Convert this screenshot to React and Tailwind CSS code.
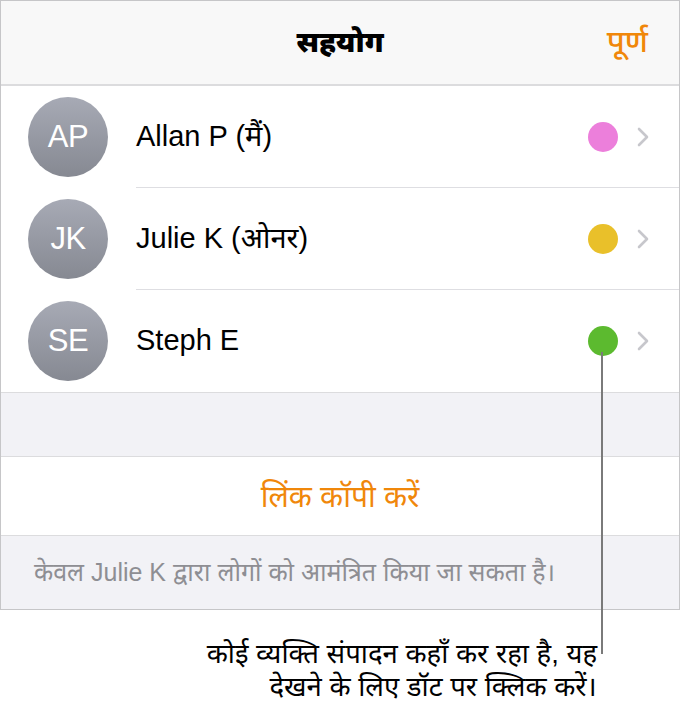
import React from "react";

const people = [
  { id: "ap", initials: "AP", name: "Allan P (मैं)", color: "bg-[#ec7fdb]" },
  { id: "jk", initials: "JK", name: "Julie K (ओनर)", color: "bg-[#e9c02a]" },
  { id: "se", initials: "SE", name: "Steph E", color: "bg-[#5cba2f]" },
];

function Chevron() {
  return (
    <svg width="14" height="22" viewBox="0 0 14 22" fill="none">
      <path d="M3 3l8 8-8 8" stroke="#c7c7cc" strokeWidth="2.6" strokeLinecap="round" strokeLinejoin="round" />
    </svg>
  );
}

function PersonRow({ person, last }) {
  return (
    <div className="flex items-center h-[102px]">
      <div className="w-[135px] shrink-0 flex items-center pl-[27px]">
        <div className="w-[80px] h-[80px] rounded-full bg-gradient-to-b from-[#a7aab5] to-[#868992] flex items-center justify-center text-white text-[31px] tracking-[-0.5px]">
          {person.initials}
        </div>
      </div>
      <div className={`flex-1 h-full flex items-center ${last ? "" : "border-b border-[#dedee2]"}`}>
        <span className="flex-1 text-[29px] text-black">{person.name}</span>
        <div className={`w-[30px] h-[30px] rounded-full ${person.color}`} />
        <div className="ml-[18px] mr-[29px] flex items-center">
          <Chevron />
        </div>
      </div>
    </div>
  );
}

export default function App() {
  return (
    <div className="relative w-[681px] h-[708px] bg-white" style={{ fontFamily: '"Liberation Sans", "Noto Sans", sans-serif' }}>
      <div className="w-[680px] border border-[#c6c6c8] bg-white">
        {/* header */}
        <div className="relative h-[85px] bg-[#f8f8f8] border-b-2 border-[#dcdcde] flex items-center justify-center">
          <span className="text-[29px] font-black text-black">सहयोग</span>
          <span className="absolute right-[31px] text-[31px] font-medium text-[#f0870a]">पूर्ण</span>
        </div>

        {people.map((p, i) => (
          <PersonRow key={p.id} person={p} last={i === people.length - 1} />
        ))}

        <div className="h-[65px] bg-[#f2f2f6] border-y border-[#dcdcde]" />

        <div className="h-[78px] flex items-center justify-center">
          <span className="text-[30px] text-[#f0870a]">लिंक कॉपी करें</span>
        </div>

        <div className="h-[74px] bg-[#f2f2f6] border-t border-[#dcdcde] flex items-center pl-[33px]">
          <span className="text-[25px] text-[#8e8e93]">केवल Julie K द्वारा लोगों को आमंत्रित किया जा सकता है।</span>
        </div>
      </div>

      {/* callout line */}
      <div className="absolute left-[601px] top-[352px] w-[2px] h-[302px] bg-[#7a7a7a]" />

      <div className="absolute right-[84px] top-[637px] text-right text-[27.5px] leading-[33px] text-black whitespace-nowrap">
        <div>कोई व्यक्ति संपादन कहाँ कर रहा है, यह</div>
        <div>देखने के लिए डॉट पर क्लिक करें।</div>
      </div>
    </div>
  );
}
